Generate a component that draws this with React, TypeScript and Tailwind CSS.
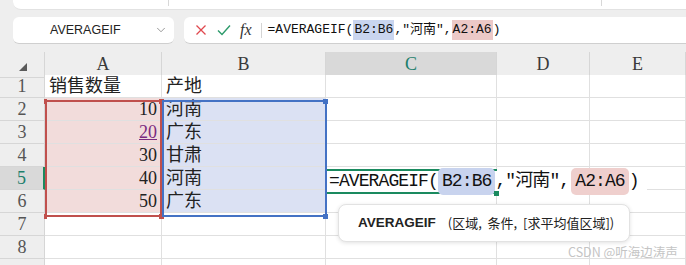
import { ChevronDown } from 'lucide-react';

const rows = [
  { n: 1, a: '销售数量', b: '产地', head: true },
  { n: 2, a: '10', b: '河南' },
  { n: 3, a: '20', b: '广东', link: true },
  { n: 4, a: '30', b: '甘肃' },
  { n: 5, a: '40', b: '河南' },
  { n: 6, a: '50', b: '广东' },
  { n: 7 },
  { n: 8 },
  { n: 0 },
];

const cols = ['A', 'B', 'C', 'D', 'E'];

const cell = 'border-r border-b border-[#e0e0e0] flex items-center';

export default function App() {
  return (
    <div
      className="w-[686px] h-[265px] overflow-hidden bg-[#eeeeee] text-[#222]"
      style={{ fontFamily: '"Liberation Serif", "Noto Sans CJK SC", serif' }}
    >
      {/* top strip */}
      <div className="h-[10px] ml-[13px] bg-white rounded-bl-[8px] flex border-b border-[#e2e2e2]">
        <div className="w-[156px] h-[6px] border-r border-[#d8d8d8]" />
        <div className="w-[433px] h-[6px] border-r border-[#d8d8d8]" />
      </div>

      {/* formula bar */}
      <div className="flex h-[27px] mt-[7px] gap-[10px]">
        <div className="ml-[13px] w-[161px] bg-white rounded-[6px] border-b border-[#cfcfcf] flex items-center pl-[37px] pr-[6px] font-['Liberation_Sans',sans-serif] text-[12.5px] text-[#222]">
          <span className="flex-1">AVERAGEIF</span>
          <ChevronDown size={14} strokeWidth={1.3} className="text-[#777]" />
        </div>
        <div className="flex-1 bg-white rounded-l-[6px] border-b border-[#cfcfcf] flex items-center">
          <svg width="12" height="12" viewBox="0 0 12 12" className="ml-[11px]">
            <path d="M1.5 1.5 L10.5 10.5 M10.5 1.5 L1.5 10.5" stroke="#e0484e" strokeWidth="1.3" />
          </svg>
          <svg width="14" height="12" viewBox="0 0 14 12" className="ml-[10px]">
            <path d="M1 6.5 L5 10.5 L13 1.5" stroke="#2c9a6a" strokeWidth="1.4" fill="none" />
          </svg>
          <span className="ml-[9px] italic text-[16px] text-[#333] font-['Liberation_Serif',serif]">fx</span>
          <div className="ml-[9px] w-px h-[15px] bg-[#d4d4d4]" />
          <div
            className="ml-[6px] text-[13px] text-[#111] flex items-center whitespace-pre"
            style={{ fontFamily: '"Liberation Mono", "Noto Sans CJK SC", monospace' }}
          >
            <span>=AVERAGEIF(</span>
            <span className="bg-[#c9d5ef] px-px">B2:B6</span>
            <span>,"河南",</span>
            <span className="bg-[#ecc9c7] px-px">A2:A6</span>
            <span>)</span>
          </div>
        </div>
      </div>

      {/* sheet */}
      <div className="relative mt-[8px]">
        <div className="grid grid-cols-[45px_117px_164px_171px_93px_1fr] auto-rows-[23px]">
          <div className="h-[26px] border-r border-b border-[#d6d6d6] bg-[#eeeeee] relative">
            <svg width="8" height="8" viewBox="0 0 8 8" className="absolute left-[19px] top-[11px]">
              <path d="M8 0 L8 8 L0 8 Z" fill="#5a5a5a" />
            </svg>
          </div>
          {cols.map((c) => (
            <div
              key={c}
              className={
                c === 'C'
                  ? 'h-[26px] border-r border-[#d6d6d6] border-b-2 border-b-[#1a8a5f] bg-[#d9d9d9] flex items-center justify-center text-[18px] text-[#1d7f6c]'
                  : 'h-[26px] border-r border-b border-[#d6d6d6] bg-[#eeeeee] flex items-center justify-center text-[18px] text-[#3a3a3a]'
              }
            >
              {c}
            </div>
          ))}
          {rows.map((r, i) => (
            <div key={i} className="contents">
              <div
                className={
                  r.n === 5
                    ? 'border-b border-[#d6d6d6] border-r-2 border-r-[#1a8a5f] bg-[#d9d9d9] flex items-center justify-center text-[18px] text-[#1d7f6c]'
                    : 'border-r border-b border-[#d6d6d6] bg-[#eeeeee] flex items-center justify-center text-[18px] text-[#555]'
                }
              >
                {r.n > 0 ? r.n : null}
              </div>
              <div
                className={
                  r.head
                    ? `${cell} bg-white pl-[4px] text-[18px]`
                    : r.a
                      ? `${cell} bg-[#f2dcdb] justify-end pr-[4px] text-[18px]`
                      : `${cell} bg-white`
                }
              >
                {r.link ? <span className="underline text-[#7a2a80]">{r.a}</span> : r.a}
              </div>
              <div
                className={
                  r.b && !r.head
                    ? `${cell} bg-[#dbe1f3] pl-[4px] text-[18px]`
                    : `${cell} bg-white pl-[4px] text-[18px]`
                }
              >
                {r.b}
              </div>
              <div className={`${cell} bg-white`} />
              <div className={`${cell} bg-white`} />
              <div className={`${cell} bg-white`} />
            </div>
          ))}
        </div>

        {/* A2:A6 reference */}
        <div className="absolute left-[45px] top-[48px] w-[117px] h-[117px] border-2 border-[#c0504d]" />
        <div className="absolute left-[44px] top-[47px] w-[3px] h-[5px] bg-[#c0504d]" />
        <div className="absolute left-[44px] top-[162px] w-[3px] h-[5px] bg-[#c0504d]" />
        <div className="absolute left-[159px] top-[47px] w-[5px] h-[5px] bg-[#c0504d]" />
        <div className="absolute left-[159px] top-[162px] w-[5px] h-[5px] bg-[#c0504d]" />

        {/* B2:B6 reference */}
        <div className="absolute left-[162px] top-[48px] w-[165px] h-[117px] border-2 border-[#4472c4]" />
        <div className="absolute left-[323px] top-[47px] w-[5px] h-[5px] bg-[#4472c4]" />
        <div className="absolute left-[323px] top-[162px] w-[5px] h-[5px] bg-[#4472c4]" />

        {/* active cell C5 */}
        <div className="absolute left-[327px] top-[117px] w-[170px] h-[25px] border-t-2 border-b-2 border-[#1a8a5f]" />
        <div className="absolute left-[327px] top-[119px] h-[21px] w-[320px] bg-white flex items-center pl-[2px]">
          <div
            className="flex items-center whitespace-pre text-[18px] tracking-[-0.9px] text-[#111]"
            style={{ fontFamily: '"Liberation Mono", "Noto Sans CJK SC", monospace' }}
          >
            <span>=AVERAGEIF(</span>
            <span className="bg-[#c8d3ee] rounded-[5px] px-[4px]">B2:B6</span>
            <span>,"河南",</span>
            <span className="bg-[#efcfcd] rounded-[5px] px-[4px] ml-[2px]">A2:A6</span>
            <span>)</span>
          </div>
        </div>
        <div className="absolute left-[494px] top-[139px] w-[5px] h-[5px] bg-[#1a8a5f]" />

        {/* function tip */}
        <div className="absolute left-[338px] top-[152px] w-[292px] h-[38px] bg-white rounded-[8px] border border-[#e2e2e2] shadow-[0_1px_4px_rgba(0,0,0,0.12)] flex items-center pl-[19px] text-[13px] text-[#222] font-['Liberation_Sans','Noto_Sans_CJK_SC',sans-serif]">
          <span className="font-bold text-[13.5px]">AVERAGEIF</span>
          <span className="ml-[12px] whitespace-pre font-['Noto_Sans_CJK_SC',sans-serif]">(区域,  条件,  [求平均值区域])</span>
        </div>

        <div className="absolute left-[568px] top-[191px] text-[12.5px] text-[#c4c4c4] font-['Noto_Sans_CJK_SC',sans-serif]">
          CSDN @听海边涛声
        </div>
      </div>
    </div>
  );
}
